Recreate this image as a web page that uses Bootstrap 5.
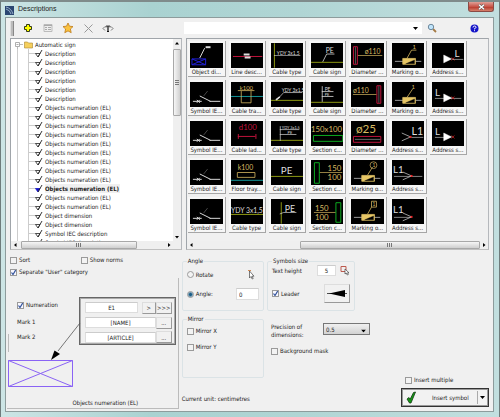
<!DOCTYPE html>
<html lang="en">
<head>
<meta charset="utf-8">
<meta name="viewport" content="width=device-width, initial-scale=1">
<title>Descriptions</title>
<link href="https://cdn.jsdelivr.net/npm/bootstrap@5.3.0/dist/css/bootstrap.min.css" rel="stylesheet">
<style>
body{font:6px/9px "DejaVu Sans Condensed","DejaVu Sans",sans-serif;color:#222;background:#b4d7d7}
.win{min-height:100vh;padding:0 5px 5px 4px;border:1px solid #6f7c7c;border-top:2px solid #7f8b8b;border-bottom:1px solid #536666;background:linear-gradient(90deg,#cde5e5,#a9d2d1 30%,#b0d5d4 60%,#c2dfdf)}
.titlebar{height:15px;font:7px/14px "Liberation Sans",sans-serif;color:#222}
.closer{width:26px;height:10px;border:1px solid #8a4a44;border-top:0;border-radius:0 0 3px 3px;background:linear-gradient(#dfa097,#c9564a 50%,#b83a2c 55%,#d6806c)}
.client{background:#f0f0f0;border:1px solid #8d9c9c;padding:0 4px}
button,input,select{font:inherit;color:inherit;border-radius:0}
.tool{border:0;background:none;padding:0;width:12px;height:12px;line-height:0}
.tools{height:20px;display:grid;grid-template-columns:175fr 239fr 67fr;align-items:center}
.grip{width:4px;height:15px;background:#bbb;border-left:1px solid #ddd;border-right:1px solid #888}
.search{height:12px;background:#fff}
.search input{border:0;background:none;height:12px;outline:0;min-width:0}
.panes{display:grid;grid-template-columns:173fr 304fr;gap:4px}
.pane{border:1px solid #a0a5aa;border-right-color:#b5b8bc;border-bottom-color:#c0c0c0;height:212px;min-width:0}
.tree{background:#fff;overflow:hidden}
.tree ul{padding:1px 0 0 2px}
.tree li{height:9px;white-space:nowrap}
.tree svg{flex:none}
.tree b{background:#f0f0f0;padding-right:1px}
.sb{background:#efefef;color:#333}
.sbv{width:8px}
.sbh{height:8px}
.thumbv{height:67px;margin-top:2px;border:1px solid #a8a8a8;border-radius:1px;background:linear-gradient(90deg,#f6f6f6,#d0d0d0)}
.thumbh{height:8px;border:1px solid #a8a8a8;border-radius:1px;background:linear-gradient(#f6f6f6,#cfcfcf)}
.arr{width:8px;height:8px;flex:none}
.symbols{display:grid;grid-template-rows:repeat(5,39px);grid-auto-columns:minmax(0,1fr);grid-auto-flow:column;padding:1px 19px 0 0}
.sym{border:0;background:#f6f6f6;border-right:1px solid #a6a6a6;border-bottom:1px solid #a6a6a6;margin:1px 2px 2px 1px;padding:2px 1px 0;text-align:center;white-space:nowrap;overflow:hidden;line-height:8px}
.sym svg{display:block;width:calc(100% - 2px);margin:0 auto;height:25px;background:#000}
.lower{display:grid;grid-template-columns:minmax(0,172fr) minmax(0,87fr) minmax(0,226fr);margin-left:-4px;margin-right:-4px;height:161px}
.chk{display:flex;align-items:center;gap:2px;line-height:8px}
.chk input{appearance:none;flex:none;margin:0;width:7px;height:7px;border:1px solid #9a9a9a;background:#f3f3f3}
.chk input[type=checkbox]:checked{background:#f8f8ff url("data:image/svg+xml,%3Csvg xmlns='http://www.w3.org/2000/svg' viewBox='0 0 7 7'%3E%3Cpath d='M1.5 3.5L3 5.5L5.7 1' fill='none' stroke='%2334549c' stroke-width='1.2'/%3E%3C/svg%3E") center/7px}
.chk input[type=radio]{border-radius:50%}
.chk input[type=radio]:checked{background:radial-gradient(#1d5d85 0 1px,#c5dbe8 3px)}
.left{position:relative;padding:6px 0 0 4px}
.userbox{border-right:1px solid #bbb;border-bottom:1px solid #bbb;height:131px;margin-left:-3px;padding:19px 2px 0 10px;margin-top:2px;display:grid;grid-template-columns:minmax(0,63fr) minmax(0,97fr);align-content:start}
.marks{display:grid;grid-template-rows:16px 16px 14px;align-items:center}
.fields{border:1px solid #666;outline:1px solid #aaa;outline-offset:-2px;padding:3px 3px 3px 5px;display:grid;grid-template-rows:13px 13px 12px;gap:2px;height:48px}
.field{border:1px solid #ddd;border-top-color:#ccc;background:#fff;text-align:center;min-width:0;padding:0 2px;height:11px}
.fields .field{width:0}
.btnx{border:1px solid #ddd;border-right-color:#999;border-bottom-color:#999;background:#f1f1f1;padding:0;line-height:9px;height:12px;flex:none}
.w16{width:16px}.w14{width:14px}
.callout-art{position:absolute;left:2px;top:69px;width:76px;height:70px;pointer-events:none}
.caption{grid-column:1/3;text-align:center;margin-top:53px;padding-left:18px}
.grp{border:1px solid #dbe3e6;border-radius:2px;padding:0 4px;margin:0}
.grp legend{float:none;width:auto;margin:0;padding:0 1px;font-size:6px;line-height:8px}
.mid{padding:7px 2px 0 3px}
.right{padding:7px 4px 0 1px}
.ang{height:54px}
.mir{height:63px;margin-top:4px}
.size{width:88px}
.num{width:23px;height:12px;text-align:left}
.num2{width:19px}
.arrowbtn{width:26px;height:19px;line-height:0}
.sel{appearance:none;width:47px;height:12px;line-height:9px;padding:0 2px;border:1px solid #777;background:linear-gradient(#f0f0f0,#d2d2d2)}
.prec-label{width:52px;line-height:8px}
.insert{border:1px solid #333;outline:1px solid #999;outline-offset:-2px;width:88px;height:19px;background:#f2f2f2}
.insert button{border:0;background:none;padding:0;line-height:0}
.insert .main{line-height:9px}
.insert .split{width:11px;border-left:1px solid #aaa;margin:2px 0}
</style>
<script src="https://cdn.jsdelivr.net/npm/bootstrap@5.3.0/dist/js/bootstrap.bundle.min.js"></script>
</head>
<body>
<div class="win d-flex flex-column">
  <header class="titlebar d-flex align-items-start">
    <svg class="mt-1" width="9" height="9" viewBox="0 0 9 9"><rect width="9" height="9" fill="#2b4672"/><path d="M1 1Q6 2 8 8M1 3Q5 4 6 8" fill="none" stroke="#b3c9df" stroke-width=".8"/></svg>
    <span class="ms-1 flex-grow-1">Descriptions</span>
    <button class="closer p-0 d-flex align-items-center justify-content-center" aria-label="Close"><svg width="7" height="6" viewBox="0 0 7 6"><path d="M1 .7l5 4.6M6 .7L1 5.3" stroke="#555" stroke-width="2.4"/><path d="M1 .7l5 4.6M6 .7L1 5.3" stroke="#fff" stroke-width="1.4"/></svg></button>
  </header>
  <main class="client flex-grow-1">
    <div class="tools">
      <div class="d-flex align-items-center gap-2">
        <span class="grip me-n1"></span>
        <button class="tool" aria-label="Add"><svg width="10" height="10" viewBox="0 0 10 10"><path d="M3.500 1.500h3v2h2v3h-2v2h-3v-2h-2v-3h2z" fill="#ff0" stroke="#333a18"/></svg></button>
        <button class="tool" aria-label="Properties"><svg width="10" height="10" viewBox="0 0 10 10"><path d="M1 1.500h8v7H1z" fill="#eee" stroke="#bbb"/><path d="M1 2.500h8M2 4.500h2M5 4.500h3M2 6.500h2M5 6.500h3" stroke="#aaa"/></svg></button>
        <button class="tool" aria-label="Favourite"><svg width="12" height="12" viewBox="0 0 12 12"><path d="M6 1l1.500 3.200 3.500.4-2.600 2.400.8 3.700L6 8.900l-3.200 1.800.8-3.700L1 4.600l3.500-.4z" fill="#fbc33e" stroke="#bd7a1a" stroke-width=".8"/></svg></button>
        <button class="tool" aria-label="Delete"><svg width="11" height="11" viewBox="0 0 11 11"><path d="M1.500 1.500l8 8M9.500 1.500l-8 8" stroke="#999"/></svg></button>
        <button class="tool" aria-label="Text"><svg width="12" height="10" viewBox="0 0 12 10"><path d="M3 3.500L1 5.500l2 2M9 3.500l2 2-2 2" fill="none" stroke="#555" stroke-width=".8"/><path d="M4 4.500v-1.500h4v1.500" fill="none" stroke="#222" stroke-width=".8"/><path d="M6 3v5.500M5 8.500h2" stroke="#111" stroke-width="1.200"/></svg></button>
      </div>
      <div class="search d-flex align-items-center px-1">
        <input class="flex-grow-1" aria-label="Search text"><svg width="5" height="3" viewBox="0 0 5 3"><path d="M0 0h5L2.500 3z"/></svg>
      </div>
      <div class="d-flex justify-content-between ps-1 pe-2">
        <button class="tool" aria-label="Search"><svg width="10" height="10" viewBox="0 0 10 10"><path d="M6 6l3 3" stroke="#a67b45" stroke-width="1.800"/><circle cx="4" cy="4" r="2.700" fill="#bfe4fb" stroke="#70899c"/></svg></button>
        <button class="tool" aria-label="Help"><svg width="9" height="9" viewBox="0 0 9 9"><circle cx="4.500" cy="4.500" r="4" fill="#1515c8"/><path d="M3 3.500Q3 2 4.500 2T6 3.400Q6 4.200 4.500 4.600V5.400M4.500 6.200V7.200" fill="none" stroke="#fff"/></svg></button>
      </div>
    </div>

    <div class="panes">
      <section class="pane tree d-flex flex-column">
        <div class="d-flex flex-grow-1 overflow-hidden">
          <ul class="list-unstyled m-0 flex-grow-1" id="tree"></ul>
          <div class="sb sbv d-flex flex-column">
            <svg class="arr" viewBox="0 0 8 8"><path d="M2 5.500h4L4 3z"/></svg>
            <div class="thumbv d-flex align-items-center justify-content-center"><svg width="4" height="5" viewBox="0 0 4 5"><path d="M0 .5h4M0 2.500h4M0 4.500h4" stroke="#777"/></svg></div>
            <svg class="arr mt-auto" viewBox="0 0 8 8"><path d="M2 3h4L4 5.500z"/></svg>
          </div>
        </div>
        <div class="sb sbh d-flex">
          <svg class="arr" viewBox="0 0 8 8"><path d="M5.500 2v4L3 4z"/></svg>
          <div class="thumbh d-flex align-items-center justify-content-center" style="width:68%;margin-left:2px"><svg width="5" height="4" viewBox="0 0 5 4"><path d="M.5 0v4M2.500 0v4M4.500 0v4" stroke="#777"/></svg></div>
          <svg class="arr ms-auto me-2" viewBox="0 0 8 8"><path d="M3 2v4L5.500 4z"/></svg>
        </div>
      </section>
      <section class="pane d-flex flex-column">
        <div class="symbols" id="symbols"></div>
        <div class="sb sbh d-flex mt-auto">
          <svg class="arr" viewBox="0 0 8 8"><path d="M5.500 2v4L3 4z"/></svg>
          <div class="thumbh ms-auto d-flex align-items-center justify-content-center" style="width:60%"><svg width="5" height="4" viewBox="0 0 5 4"><path d="M.5 0v4M2.500 0v4M4.500 0v4" stroke="#777"/></svg></div>
          <svg class="arr" viewBox="0 0 8 8"><path d="M3 2v4L5.500 4z"/></svg>
        </div>
      </section>
    </div>

    <div class="lower">
      <section class="left">
        <div class="d-flex">
          <label class="chk" style="width:42%"><input type="checkbox">Sort</label>
          <label class="chk"><input type="checkbox">Show norms</label>
        </div>
        <label class="chk mt-1"><input type="checkbox" checked>Separate "User" category</label>
        <div class="userbox">
          <div class="marks">
            <label class="chk"><input type="checkbox" checked>Numeration</label>
            <label for="m1">Mark 1</label>
            <label for="m2">Mark 2</label>
          </div>
          <div class="fields">
            <div class="d-flex align-items-center"><input class="field flex-grow-1" value="E1" aria-label="Numeration value"><button class="btnx w14 ms-1">&gt;</button><button class="btnx w16">&gt;&gt;&gt;</button></div>
            <div class="d-flex align-items-center"><input class="field flex-grow-1" id="m1" value="[NAME]"><button class="btnx w16">...</button></div>
            <div class="d-flex align-items-center"><input class="field flex-grow-1" id="m2" value="[ARTICLE]"><button class="btnx w16">...</button></div>
          </div>
          <div class="caption">Objects numeration (EL)</div>
        </div>
        <svg class="callout-art" viewBox="0 0 76 70"><path d="M.5 15v18" stroke="#bbb"/><path d="M72 4L50 32" stroke="#555" stroke-width=".8"/><path d="M43 41L46.500 31.500L52 35z"/><path d="M.5 41.500h64v26h-64zM.5 41.500l64 26M64.500 41.500l-64 26" fill="none" stroke="#8a63f5"/></svg>
      </section>

      <section class="mid">
        <fieldset class="grp ang"><legend>Angle</legend>
          <div class="d-flex align-items-center mt-1 pe-1">
            <label class="chk"><input type="radio" name="ang">Rotate</label>
            <svg class="ms-auto" width="8" height="11" viewBox="0 0 8 11"><path d="M1 1.500h3" stroke="#d08a55"/><path d="M2.500 2v7l1.500-1.500 1.200 2.500 1-.5L5 7.200h2z" fill="#fff" stroke="#444" stroke-width=".7"/></svg>
          </div>
          <div class="d-flex align-items-center justify-content-between mt-2">
            <label class="chk" for="a1"><input type="radio" id="a1" name="ang" checked>Angle:</label>
            <input class="field num" value="0" aria-label="Angle value">
          </div>
        </fieldset>
        <fieldset class="grp mir"><legend>Mirror</legend>
          <label class="chk mt-1"><input type="checkbox">Mirror X</label>
          <label class="chk mt-2"><input type="checkbox">Mirror Y</label>
        </fieldset>
        <div class="pt-3 text-nowrap">Current unit: centimetres</div>
      </section>

      <section class="right d-flex flex-column">
        <fieldset class="grp ang size ps-1"><legend>Symbols size</legend>
          <div class="d-flex align-items-center">
            <label for="th" class="text-nowrap flex-grow-1">Text height</label>
            <input class="field num2" id="th" value="5">
            <svg class="ms-1" width="10" height="11" viewBox="0 0 10 11"><path d="M1 1.500h5v5H1z" fill="none" stroke="#bd5a4e"/><path d="M5 4v5l1.200-1L7.300 10l1-.5-.8-1.700h1.500z" fill="#fff" stroke="#444" stroke-width=".7"/></svg>
          </div>
          <div class="d-flex align-items-center justify-content-between mt-2">
            <label class="chk"><input type="checkbox" checked>Leader</label>
            <button class="btnx arrowbtn" aria-label="Arrow style"><svg width="20" height="7" viewBox="0 0 20 7"><path d="M0 3.500h20" stroke="#222" stroke-width=".8"/><path d="M2 3.500L18 0v7z"/></svg></button>
          </div>
        </fieldset>
        <div class="d-flex mt-2 pt-1 ps-1">
          <label for="prec" class="prec-label">Precision of dimensions:</label>
          <span class="position-relative"><select class="sel" id="prec"><option>0.5</option></select><svg class="position-absolute top-50 end-0 translate-middle-y me-1 pe-none" width="5" height="3" viewBox="0 0 5 3"><path d="M0 0h5L2.500 3z"/></svg></span>
        </div>
        <label class="chk ps-1 mt-2"><input type="checkbox">Background mask</label>
        <div class="mt-auto ms-auto mb-1">
          <label class="chk ps-1 mb-1"><input type="checkbox">Insert multiple</label>
          <div class="insert d-flex">
            <button class="main flex-grow-1 d-flex align-items-center gap-3 ps-1"><svg width="10" height="13" viewBox="0 0 10 13"><path d="M1 8l2-1.500 1 2L7.500 1.500l2-.5L5 12H3.500z" fill="#129a12" stroke="#133813" stroke-width=".8"/></svg>Insert symbol</button>
            <button class="split" aria-label="More insert options"><svg width="5" height="3" viewBox="0 0 5 3"><path d="M0 0h5L2.500 3z"/></svg></button>
          </div>
        </div>
      </section>
    </div>
  </main>
</div>
<script>
const rep=(n,t)=>Array(n).fill(t);
const rows=[...rep(6,"Description"),...rep(9,"Objects numeration (EL)"),"*Objects numeration (EL)",...rep(2,"Objects numeration (EL)"),...rep(2,"Object dimension"),...rep(2,"Symbol IEC description")];
document.getElementById("tree").innerHTML=
`<li class="d-flex"><svg width="22" height="9" viewBox="0 0 22 9"><path d="M7 4.500h3M4.500 7v2" stroke="#bbb"/><path d="M2.500 2.500h4v4h-4zM3.500 4.500h2" fill="#fff" stroke="#999" stroke-width=".8"/><path d="M11.500 2h3l1 1h4v5h-8z" fill="#f5cf5c" stroke="#a98430" stroke-width=".6"/></svg>Automatic sign</li>`+
rows.map(r=>{const b=r[0]=="*";return `<li class="d-flex"><svg width="32" height="9" viewBox="0 0 32 9"><path d="M4.500 0v9M15.500 0v9M16 4.500h7" stroke="#ccc"/><path d="M22.500 4.500h4.500L25 8z" fill="${b?"#1111c8":"#fff"}" stroke="${b?"#1111c8":"#222"}" stroke-width=".8"/><path d="M25 8L29 1" stroke="#222" stroke-width=".9"/></svg>${b?`<b>${r.slice(1)}</b>`:r}</li>`}).join("");

const W="#ddd",Y="#d9ba62",G="#8f9b12",GR="#0cae20",R="#c3133c";
const L=(d,c,w=1,f="none")=>`<path d="${d}" stroke="${c}" stroke-width="${w}" fill="${f}"/>`;
const T=(x,y,s,t,c)=>`<text x="${x}" y="${y}" font-size="${s}" fill="${c}" font-family="Lato,sans-serif">${t}</text>`;
const iec=L("M3 19.500h9M20 19.500h11M10 14l11 5.500",W,1)+L("M7 18l3 3M10 18l-3 3",W)+L("M14 14l4-5","#777",.6);
const box=L("M3 18.500h27",W,.7)+L("M11 15.500h13v6H11z",Y,.8,"#e8c765")+L("M14 21l9-4v4z","#000",.3,"#000");
const tri=(x,y)=>L(`M${x} ${y-4}v8l8-4z`,"#fff",.5,"#fff")+L(`M${x+8} ${y-1.5}l3 3M${x+11} ${y-1.5}l-3 3`,"#c22",.8);
const fork=(x,y)=>L(`M${x-9} ${y-4}L${x} ${y}l-9 4`,W,.7)+L(`M${x-1} ${y}h2`,"#e22",2);
// Listed column by column, five symbols per column
const symbols=[
["Object di...",L("M10 15L15 5",W)+L("M16 4h5",W,2)+L("M2 16h14v6H2zM2 16l14 6M16 16L2 22","#2020d8")],
["Symbol IE...",iec],["Symbol IE...",iec],["Symbol IE...",iec],["Symbol IE...",iec],
["Line desc...",L("M2 13.500h30",R)+L("M13 11.500h6M14 14.500h6",W,2)],
["Cable tra...",L("M0 14.500h33","#12979a")+L("M10.500 9v12h10V9M7 8.500h17",Y,.8)+T(9,8,6,"k100",Y)],
["Cable lad...",T(8,9,8,"d100",R)+L("M7 15.500h18M7.500 13v5M25.500 13v5",R)],
["Floor tray...",T(7,10,7,"k100",Y)+L("M6.500 12.500h18v5h-18z",Y,.8)+L("M0 20.500h33","#12979a")],
["Cable type",T(0,14,7,"YDY 3x1,5",W)+L("M0 15.500h33",G)],
["Cable type",L("M3.500 0v25",G)+T(6,12,5,"YDY 3x1,5",W)+L("M3 12.500h27",W,.6)],
["Cable type",L("M0 18.500h33",G)+T(11,10,5,"YDY 3x1,5",W)+L("M6 18l7-7.500h19",W,.7)+L("M5 18l4-3",W,1.5)],
["Cable type",L("M0 19.500h33",G)+L("M9.500 5v15M9 8.500h20M9 13.500h17",W,.7)+T(11,8,4,"YDY 3x1,5",W)+T(17,13,4,"PE",W)],
["Cable sign",L("M0 16.500h33",G)+T(10,14,10,"PE",W)],
["Cable sign",L("M10.500 3v22",G)+T(14,13,9,"PE",W)+L("M9 15l4-1.500h13",W,.7)],
["Cable sign",L("M0 19.500h33",G)+T(15,10,7,"PE",W)+L("M12 19l4-8h8",W,.8)],
["Cable sign",L("M0 20.500h33",G)+L("M11.500 4v16M11 9.500h12M11 14.500h12",W,.8)+T(14,9,5,"PE",W)+T(14,14,4,"PE",W)],
["Section c...",T(0,11,8,"150x100",Y)+L("M2.500 14.500h30v6h-30z",GR)],
["Section c...",L("M3.500 2.500h5v21h-5z",GR)+L("M9 12.500h23",Y,.7)+T(17,11,8,"150",Y)+T(17,20,8,"100",Y)],
["Section c...",L("M25.500 3.500h5v20h-5z",GR)+L("M3 13.500h22",Y,.7)+T(4,12,8,"150",Y)+T(4,21,8,"100",Y)],
["Diameter ...",L("M2.500 3.500h4v18h-4z",R)+L("M4.500 4v17","#999",.6)+L("M7 12.500h25",Y,.7)+T(14,11,7,"ø110",Y)],
["Diameter ...",L("M26.500 3.500h4v18h-4z",R)+L("M28.500 4v17","#999",.6)+L("M2 12.500h24",Y,.7)+T(2,11,7,"ø110",Y)],
["Diameter ...",T(5,12,12,"ø25",Y)+L("M2.500 15.500h28v6h-28z",R)+L("M4 18.500h26","#999",.7)],
["Marking o...",box+L("M17 15l5-8",Y,.8)+`<circle cx="23" cy="5" r="3.5" fill="none" stroke="${Y}" stroke-width=".7"/>`+T(22,7,5,"1",Y)],
["Marking o...",box+L("M17 15l4-7V2h5v6h-5",Y,.8)+T(22,7,5,"1",Y)],
["Marking o...",box+L("M15 16l5-9h5",Y,.8)+T(21,6,6,"1",Y)],
["Marking o...",box+L("M15 16l6-9",Y,.8)+T(20,7,6,"1",Y)],
["Address s...",L("M10 12l9 4-9 4",W,.7)+L("M18 16h2","#e22",2)+T(20,14,11,"L1",W)+L("M20 16.500h12",W,.6)],
["Address s...",T(1,13,10,"L1",W)+L("M2 16.500h29",W,.6)+fork(20,16)],
["Address s...",T(1,14,10,"L1",W)+L("M2 18.500h18",W,.6)+fork(20,18)],
["Address s...",tri(12,16)+L("M21 16.500h11",W,.6)+T(23,14,10,"L",W)],
["Address s...",T(3,14,10,"L",W)+L("M3 16.500h27",W,.6)+tri(12,16)],
["Address s...",T(3,14,10,"L",W)+L("M3 16.500h10",W,.6)+tri(12,16)]
];
document.getElementById("symbols").innerHTML=symbols.map(([name,art])=>`<button class="sym"><svg viewBox="0 0 33 25">${art}</svg>${name}</button>`).join("");
</script>
</body>
</html>
